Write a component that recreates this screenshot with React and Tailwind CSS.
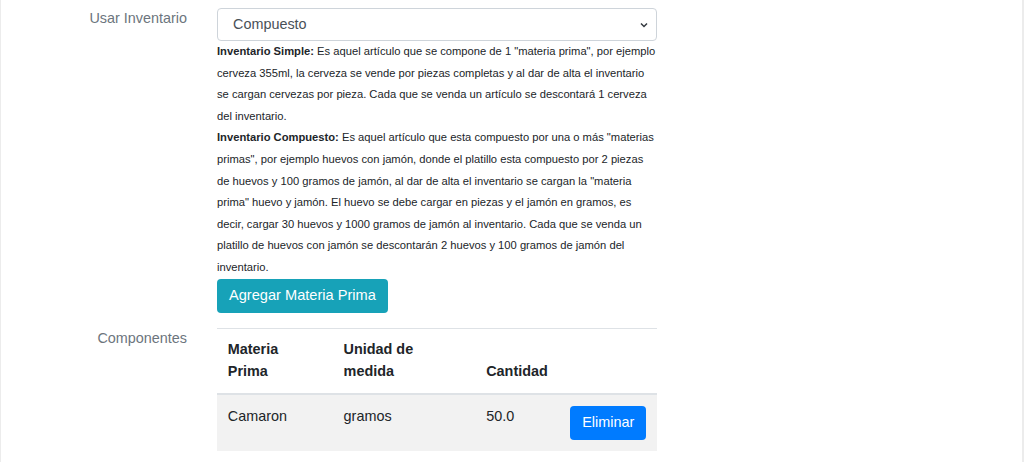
import React from 'react';

const components = [
  { id: 1, name: 'Camaron', unit: 'gramos', qty: '50.0' },
];

function FormRow({ label, children }) {
  return (
    <div className="flex">
      <div className="w-[186px] shrink-0 text-right text-[#6c757d] leading-[21.6px]">{label}</div>
      <div className="ml-[30px] w-[440px]">{children}</div>
    </div>
  );
}

export default function App() {
  return (
    <div
      className="min-h-[462px] bg-white border-l border-r-2 border-[#ececec] text-[14.4px] text-[#212529]"
      style={{ fontFamily: '"Liberation Sans", Arial, sans-serif' }}
    >
      <div className="pt-[8px] space-y-[15px]">
        <FormRow label="Usar Inventario">
          <div className="h-[33px] flex items-center justify-between border border-[#ced4da] rounded-[4px] pl-[15px] pr-[8px] text-[#495057]">
            <span>Compuesto</span>
            <svg width="8" height="6" viewBox="0 0 8 6" fill="none" stroke="#343a40" strokeWidth="1.5">
              <path d="M1 1.5l3 3 3-3" />
            </svg>
          </div>
          <div className="text-[11.2px] leading-[21.6px] whitespace-nowrap">
            <div>
              <b>Inventario Simple:</b> Es aquel artículo que se compone de 1 "materia prima", por ejemplo<br />
              cerveza 355ml, la cerveza se vende por piezas completas y al dar de alta el inventario<br />
              se cargan cervezas por pieza. Cada que se venda un artículo se descontará 1 cerveza<br />
              del inventario.
            </div>
            <div>
              <b>Inventario Compuesto:</b> Es aquel artículo que esta compuesto por una o más "materias<br />
              primas", por ejemplo huevos con jamón, donde el platillo esta compuesto por 2 piezas<br />
              de huevos y 100 gramos de jamón, al dar de alta el inventario se cargan la "materia<br />
              prima" huevo y jamón. El huevo se debe cargar en piezas y el jamón en gramos, es<br />
              decir, cargar 30 huevos y 1000 gramos de jamón al inventario. Cada que se venda un<br />
              platillo de huevos con jamón se descontarán 2 huevos y 100 gramos de jamón del<br />
              inventario.
            </div>
          </div>
          <button className="h-[34px] px-[12px] bg-[#17a2b8] text-white rounded-[4px] text-[14.6px]">
            Agregar Materia Prima
          </button>
        </FormRow>

        <FormRow label="Componentes">
          <table className="w-full border-collapse text-left">
            <thead>
              <tr className="border-t border-b-2 border-[#dee2e6] align-bottom">
                <th className="w-[116px] p-[10.8px] font-bold leading-[21.6px]">Materia<br />Prima</th>
                <th className="w-[143px] p-[10.8px] font-bold leading-[21.6px]">Unidad de<br />medida</th>
                <th className="w-[84px] p-[10.8px] font-bold leading-[21.6px]">Cantidad</th>
                <th className="p-[10.8px]"></th>
              </tr>
            </thead>
            <tbody>
              {components.map(c => (
                <tr key={c.id} className="bg-[#f2f2f2] align-top">
                  <td className="p-[10.8px] leading-[21.6px]">{c.name}</td>
                  <td className="p-[10.8px] leading-[21.6px]">{c.unit}</td>
                  <td className="p-[10.8px] leading-[21.6px]">{c.qty}</td>
                  <td className="p-[10.8px]">
                    <button className="h-[34px] px-[12px] bg-[#007bff] text-white rounded-[4px] text-[14.4px]">
                      Eliminar
                    </button>
                  </td>
                </tr>
              ))}
            </tbody>
          </table>
        </FormRow>
      </div>
    </div>
  );
}
